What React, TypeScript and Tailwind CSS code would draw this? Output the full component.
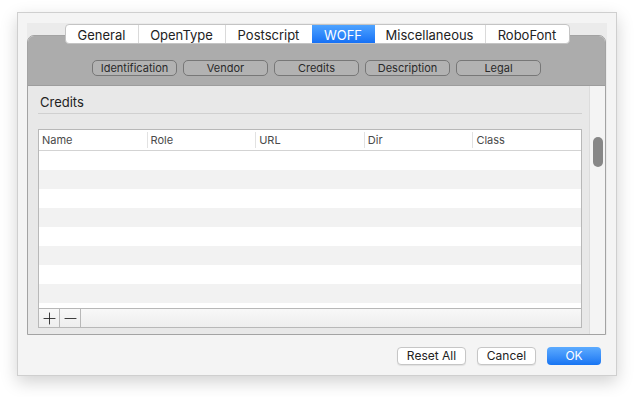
import { Plus, Minus } from "lucide-react";

const tabs = ["General", "OpenType", "Postscript", "WOFF", "Miscellaneous", "RoboFont"];
const tabWidths = ["w-[72px]", "w-[87px]", "w-[87px]", "w-[63px]", "w-[110px]", "w-[84px]"];
const sections = ["Identification", "Vendor", "Credits", "Description", "Legal"];
const columns = ["Name", "Role", "URL", "Dir", "Class"];
const rows = Array.from({ length: 8 }, (_, i) => i);

export default function App() {
  return (
    <div className="w-[634px] h-[397px] bg-white overflow-hidden font-['Inter','Liberation_Sans',sans-serif] text-[#222]">
      {/* window */}
      <div className="ml-[17px] mt-[12px] w-[600px] h-[364px] bg-[#f4f4f4] border border-[#cfcfcf] shadow-[0_6px_16px_rgba(0,0,0,0.18)] flex flex-col">
        <div className="mx-[9px] mt-[10px] h-[312px] bg-[#ebebeb] flex flex-col">
          {/* tab strip */}
          <div className="relative z-10 mt-[1px] flex justify-center">
            <div className="flex h-[20px] rounded-[4px] border border-[#c4c4c4] bg-white overflow-hidden">
              {tabs.map((t, i) => (
                <div
                  key={t}
                  className={
                    t === "WOFF"
                      ? `${tabWidths[i]} flex items-center justify-center pt-[3px] text-[13px] text-white bg-gradient-to-b from-[#4ea3ff] to-[#1570f5]`
                      : `${tabWidths[i]} flex items-center justify-center pt-[3px] text-[13px] text-[#222] ${i > 0 && tabs[i - 1] !== "WOFF" ? "border-l border-[#dadada]" : ""}`
                  }
                >
                  {t}
                </div>
              ))}
            </div>
          </div>

          {/* tab box */}
          <div className="-mt-[9px] mr-[1px] flex-1 flex flex-col rounded-t-[7px] border border-[#a3a3a3] overflow-hidden">
            <div className="h-[50px] shrink-0 bg-[#acacac] border-b border-[#9d9d9d] flex items-start justify-center gap-[6px] pt-[24px]">
              {sections.map((s) => (
                <div
                  key={s}
                  className="w-[85px] h-[16px] rounded-[5px] border border-[#777] bg-[#b2b2b2] flex items-center justify-center text-[11px] text-[#2a2a2a]"
                >
                  {s}
                </div>
              ))}
            </div>

            <div className="flex-1 flex bg-[#e8e8e8]">
              {/* content */}
              <div className="flex-1 pl-[10px] pr-[7px] flex flex-col">
                <div className="pl-[2px] pt-[7px] h-[28px] border-b border-[#d0d0d0] text-[13px] text-[#222]">
                  Credits
                </div>
                {/* table */}
                <div className="mt-[15px] border border-[#b8b8b8] bg-white flex flex-col h-[199px]">
                  <div className="h-[21px] flex border-b border-[#d3d3d3] shrink-0">
                    {columns.map((c, i) => (
                      <div
                        key={c}
                        className={`flex-1 flex items-center pl-[3px] text-[11px] text-[#4a4a4a] ${i > 0 ? "border-l border-[#e2e2e2] my-[2px]" : ""}`}
                      >
                        {c}
                      </div>
                    ))}
                  </div>
                  <div className="flex-1 overflow-hidden">
                    {rows.map((r) => (
                      <div key={r} className={`h-[19px] ${r % 2 === 1 ? "bg-[#f2f2f2]" : "bg-white"}`} />
                    ))}
                  </div>
                  <div className="h-[19px] shrink-0 flex border-t border-[#b8b8b8] bg-gradient-to-b from-[#f8f8f8] to-[#eeeeee]">
                    <div className="w-[21px] flex items-center justify-center border-r border-[#b8b8b8] text-[#222]">
                      <Plus size={19} strokeWidth={1.1} />
                    </div>
                    <div className="w-[21px] flex items-center justify-center border-r border-[#b8b8b8] text-[#222]">
                      <Minus size={19} strokeWidth={1.1} />
                    </div>
                  </div>
                </div>
              </div>
              {/* scrollbar */}
              <div className="w-[16px] shrink-0 bg-[#f4f4f4] border-l border-[#dcdcdc] pt-[51px] flex justify-center">
                <div className="w-[10px] h-[30px] rounded-full bg-[#878787]" />
              </div>
            </div>
          </div>
        </div>

        {/* footer buttons */}
        <div className="mt-[12px] pr-[15px] flex justify-end gap-[11px]">
          <button className="w-[69px] h-[18px] rounded-[4px] border border-[#c6c6c6] bg-white shadow-[0_1px_1px_rgba(0,0,0,0.08)] text-[12px] text-[#222] flex items-center justify-center">
            Reset All
          </button>
          <button className="w-[59px] h-[18px] rounded-[4px] border border-[#c6c6c6] bg-white shadow-[0_1px_1px_rgba(0,0,0,0.08)] text-[12px] text-[#222] flex items-center justify-center">
            Cancel
          </button>
          <button className="w-[54px] h-[18px] rounded-[4px] bg-gradient-to-b from-[#5cabff] to-[#1674f2] text-[12px] text-white flex items-center justify-center">
            OK
          </button>
        </div>
      </div>
    </div>
  );
}
